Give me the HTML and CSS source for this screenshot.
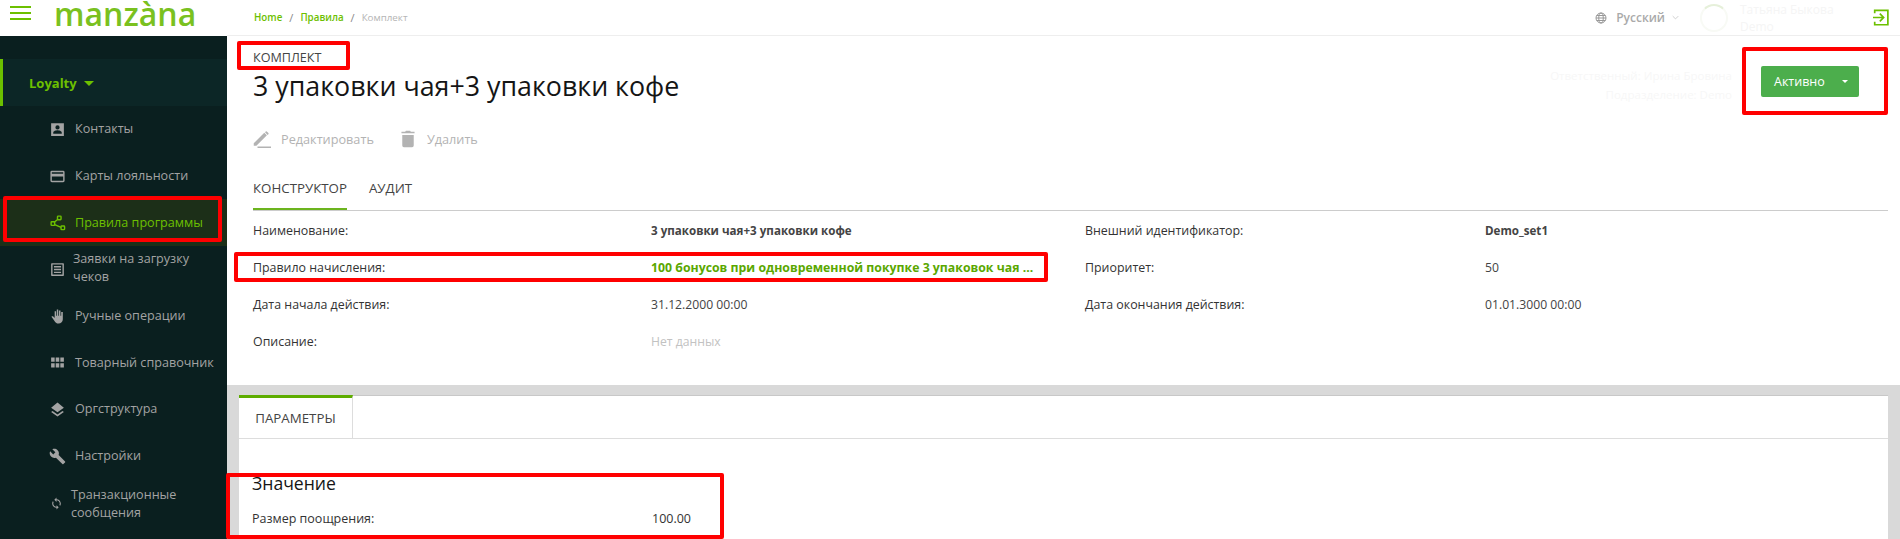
FILE: index.html
```html
<!DOCTYPE html>
<html lang="ru">

<head>
    <meta charset="UTF-8">
    <title>Manzana Loyalty</title>
    <link rel="stylesheet" href="styles.css">
</head>

<body>
    <aside class="sidebar">
        <div class="brand">
            <div class="burger"><span></span><span></span><span></span></div>
            <div class="logo">manzàna</div>
        </div>
        <nav class="nav">
            <div class="nav-group">Loyalty <i class="caret"></i></div>
            <a class="nav-item">
                <svg class="nav-icon" viewBox="0 0 24 24"><path d="M3 3h18v18H3z M12 6a3 3 0 1 0 0 6a3 3 0 0 0 0-6z M6 18h12v-1.500c0-2.500-4-3.500-6-3.500s-6 1-6 3.500z" fill-rule="evenodd"/></svg>
                <span>Контакты</span>
            </a>
            <a class="nav-item">
                <svg class="nav-icon" viewBox="0 0 24 24"><path d="M20 4H4a2 2 0 0 0-2 2v12a2 2 0 0 0 2 2h16a2 2 0 0 0 2-2V6a2 2 0 0 0-2-2zm0 14H4v-6h16zm0-10H4V6h16z"/></svg>
                <span>Карты лояльности</span>
            </a>
            <a class="nav-item active">
                <svg class="nav-icon" viewBox="0 0 24 24" fill="none" stroke="currentColor" stroke-width="2"><rect x="12" y="3" width="5" height="5" rx="1"/><rect x="3" y="11" width="5" height="5" rx="1"/><rect x="17" y="17" width="5" height="5" rx="1"/><path d="M13 7l-6 5M8 15l9 4"/></svg>
                <span>Правила программы</span>
            </a>
            <a class="nav-item two-lines">
                <svg class="nav-icon" viewBox="0 0 24 24"><path d="M4 3h16a1 1 0 0 1 1 1v16a1 1 0 0 1-1 1H4a1 1 0 0 1-1-1V4a1 1 0 0 1 1-1zm1 2v14h14V5zm2 2h10v2H7zm0 4h10v2H7zm0 4h10v2H7z" fill-rule="evenodd"/></svg>
                <span>Заявки на загрузку чеков</span>
            </a>
            <a class="nav-item">
                <svg class="nav-icon" viewBox="0 0 24 24"><path d="M11 2h2v9h1V3.500h2.200V11h1V5.500h2.300V16c0 3.500-2.500 6-6 6c-3 0-4.500-1.500-6-4l-4-5.500c.8-.9 2-.9 2.800-.2L8 14V4.500h2V11h1z"/></svg>
                <span>Ручные операции</span>
            </a>
            <a class="nav-item">
                <svg class="nav-icon" viewBox="0 0 24 24"><path d="M3 5h5v6H3zm6.500 0h5v6h-5zM16 5h5v6h-5zM3 13h5v6H3zm6.500 0h5v6h-5zM16 13h5v6h-5z"/></svg>
                <span>Товарный справочник</span>
            </a>
            <a class="nav-item">
                <svg class="nav-icon" viewBox="0 0 24 24"><path d="M12 2L3 9.500L12 16l9-6.500z M5 14l-2 1.500L12 22l9-6.500L19 14l-7 5z"/></svg>
                <span>Оргструктура</span>
            </a>
            <a class="nav-item">
                <svg class="nav-icon" viewBox="0 0 24 24"><path d="M22.700 19l-9.100-9.100c.9-2.300.4-5-1.500-6.900c-2-2-5-2.400-7.400-1.300L9 6L6 9L1.600 4.700C.4 7.100.9 10.100 2.900 12.100c1.900 1.900 4.600 2.400 6.900 1.500l9.100 9.100c.4.400 1 .4 1.400 0l2.300-2.300c.5-.4.500-1.100.1-1.400z"/></svg>
                <span>Настройки</span>
            </a>
            <a class="nav-item two-lines sync">
                <svg class="nav-icon small" viewBox="0 0 24 24"><path d="M12 4V1L8 5l4 4V6c3.300 0 6 2.700 6 6c0 1-.3 2-.7 2.800l1.500 1.500C19.500 15 20 13.600 20 12c0-4.400-3.600-8-8-8zm0 14c-3.300 0-6-2.700-6-6c0-1 .3-2 .7-2.800L5.200 7.700C4.500 9 4 10.400 4 12c0 4.400 3.600 8 8 8v3l4-4l-4-4z"/></svg>
                <span>Транзакционные сообщения</span>
            </a>
        </nav>
    </aside>

    <main class="content">
        <header class="topbar">
            <div class="breadcrumb">
                <a>Home</a><em>/</em><a>Правила</a><em>/</em><span>Комплект</span>
            </div>
            <div class="topbar-right">
                <svg class="globe" viewBox="0 0 24 24" fill="none" stroke="currentColor" stroke-width="2"><circle cx="12" cy="12" r="10"/><ellipse cx="12" cy="12" rx="4.500" ry="10"/><path d="M2 12h20M3.500 7h17M3.500 17h17"/></svg>
                <span class="lang">Русский</span>
                <svg class="chevron" viewBox="0 0 10 6" fill="none" stroke="currentColor"><path d="M1 1l4 4l4-4"/></svg>
                <div class="avatar"></div>
                <div class="user">Татьяна Быкова<br>Demo</div>
                <svg class="logout" viewBox="0 0 20 20" fill="none" stroke="#6cc000" stroke-width="2"><path d="M2 5V1.500h15.500v17H2V15"/><path d="M0 10h12M8 5.500l4.500 4.500L8 14.500"/></svg>
            </div>
        </header>

        <section class="summary">
            <div class="summary-top">
                <div>
                    <div class="kind">КОМПЛЕКТ</div>
                    <h1>3 упаковки чая+3 упаковки кофе</h1>
                </div>
                <div class="summary-side">
                    <div class="owner">Ответственный: Ирина Бровина<br>Подразделение: Demo</div>
                    <div class="status-btn"><span>Активно</span><i class="caret white"></i></div>
                </div>
            </div>
            <div class="actions">
                <a class="action">
                    <svg viewBox="0 0 24 24"><path d="M1 17.500V21h3.500L18.500 7L15 3.500zM20.500 5.500a1 1 0 0 0 0-1.400L18.400 2a1 1 0 0 0-1.400 0L16 3l3.500 3.500z"/><path d="M6 22h18v2H6z"/></svg>
                    Редактировать
                </a>
                <a class="action">
                    <svg viewBox="3 1 18 22"><path d="M5 20a2 2 0 0 0 2 2h10a2 2 0 0 0 2-2V7H5zM20 3h-4.500l-1-1h-5l-1 1H4v2h16z"/></svg>
                    Удалить
                </a>
            </div>
            <div class="tabs">
                <a class="tab current">КОНСТРУКТОР</a>
                <a class="tab">АУДИТ</a>
            </div>
            <div class="details">
                <div class="label">Наименование:</div>
                <div class="value bold">3 упаковки чая+3 упаковки кофе</div>
                <div class="label">Внешний идентификатор:</div>
                <div class="value bold">Demo_set1</div>

                <div class="label">Правило начисления:</div>
                <div class="value bold link">100 бонусов при одновременной покупке 3 упаковок чая и 3 упаковок кофе</div>
                <div class="label">Приоритет:</div>
                <div class="value">50</div>

                <div class="label">Дата начала действия:</div>
                <div class="value">31.12.2000 00:00</div>
                <div class="label">Дата окончания действия:</div>
                <div class="value">01.01.3000 00:00</div>

                <div class="label">Описание:</div>
                <div class="value muted">Нет данных</div>
            </div>
        </section>

        <section class="panel-wrap">
            <div class="panel">
                <div class="panel-tabs">
                    <a class="panel-tab">ПАРАМЕТРЫ</a>
                </div>
                <div class="panel-body">
                    <h2>Значение</h2>
                    <div class="param">
                        <div class="param-label">Размер поощрения:</div>
                        <div class="param-value">100.00</div>
                    </div>
                </div>
            </div>
        </section>
    </main>

    <!-- red marks drawn over the screenshot -->
    <div class="mark mark-rules"></div>
    <div class="mark mark-kind"></div>
    <div class="mark mark-status"></div>
    <div class="mark mark-accrual"></div>
    <div class="mark mark-value"></div>
</body>

</html>
```

FILE: styles.css
```css
html, body {
  height: 100%;
  overflow: hidden;
}
body {
  margin: 0;
  display: flex;
  font-family: "Open Sans", sans-serif;
  font-size: 13px;
  color: #333333;
  background: #ffffff;
}
.sidebar {
  flex: 0 0 227px;
  height: 539px;
  overflow: hidden;
  background: #0a1f1f;
}
.brand {
  height: 36px;
  background: #ffffff;
  display: flex;
  align-items: center;
  overflow: hidden;
}
.burger {
  width: 21px;
  margin-left: 10px;
  margin-top: -6px;
}
.burger span {
  display: block;
  height: 2px;
  background: #6cc000;
  margin-bottom: 4px;
}
.logo {
  margin-left: 23px;
  margin-top: -9px;
  color: #7ac11f;
  font-family: "Open Sans", sans-serif;
  font-weight: 600;
  font-size: 32px;
  line-height: 36px;
}
.nav {
  padding-top: 23px;
}
.nav-group {
  height: 47px;
  display: flex;
  align-items: center;
  gap: 7px;
  padding-left: 26px;
  background: #0c2626;
  border-left: 3px solid #6cc000;
  color: #6cc000;
  font-weight: 700;
  font-size: 13px;
}
.caret {
  display: inline-block;
  width: 0;
  height: 0;
  border-left: 5px solid transparent;
  border-right: 5px solid transparent;
  border-top: 5px solid #6cc000;
  margin-top: 2px;
}
.caret.white {
  border-left-width: 3.500px;
  border-right-width: 3.500px;
  border-top: 3.500px solid #ffffff;
  margin: 0;
}
.nav-item {
  height: 46.700px;
  display: flex;
  align-items: center;
  padding-left: 49px;
  color: #a3a3a3;
  font-size: 12.600px;
  line-height: 18px;
}
.nav-item span {
  margin-left: 9px;
  max-width: 150px;
}
.nav-item.active {
  background: #1c2f18;
  color: #6cc000;
}
.nav-item.two-lines span {
  margin-left: 7px;
  margin-top: -3px;
}
.nav-item.sync span {
  margin-left: 8px;
  margin-top: 0;
}
.nav-item.sync {
  margin-top: 1px;
}
.nav-icon {
  width: 17px;
  height: 17px;
  flex: none;
  fill: currentColor;
}
.nav-icon[fill="none"] {
  fill: none;
}
.nav-icon.small {
  width: 13px;
  height: 13px;
  margin-left: 1px;
}

.content {
  flex: 1;
  min-width: 0;
}
.topbar {
  height: 35px;
  border-bottom: 1px solid #eeeeee;
  display: flex;
  justify-content: space-between;
  align-items: center;
}
.breadcrumb {
  padding-left: 27px;
  font-size: 9.800px;
  color: #b5b5b5;
  display: flex;
  align-items: center;
}
.breadcrumb a {
  color: #6cc000;
  font-weight: 600;
}
.breadcrumb em {
  font-style: normal;
  color: #888888;
  margin: 0 7px;
  font-size: 11px;
}
.topbar-right {
  display: flex;
  align-items: center;
  color: #aaaaaa;
  padding-right: 10px;
}
.globe {
  width: 12px;
  height: 12px;
  color: #999999;
  margin-right: 9px;
}
.lang {
  font-weight: 600;
  font-size: 12px;
}
.chevron {
  width: 7px;
  height: 5px;
  margin-left: 7px;
  color: #bbbbbb;
}
.avatar {
  width: 24px;
  height: 24px;
  margin-left: 21px;
  border-radius: 50%;
  border: 2px solid #f8faf5;
  border-top-color: #e6f0da;
}
.user {
  width: 133px;
  margin-left: 12px;
  color: #f5f5f5;
  font-size: 12px;
  line-height: 17px;
}
.logout {
  width: 17px;
  height: 19px;
}

.summary {
  height: 349px;
  padding: 0 12px 0 26px;
  box-sizing: border-box;
}
.summary-top {
  display: flex;
  justify-content: space-between;
  padding-top: 14px;
}
.kind {
  font-size: 12.600px;
  line-height: 16px;
  color: #444444;
}
h1 {
  margin: 0;
  font-size: 26.800px;
  font-weight: 400;
  line-height: 40px;
  color: #151515;
}
.summary-side {
  display: flex;
  align-items: flex-start;
  margin-right: 29px;
}
.owner {
  margin-top: 16px;
  margin-right: 29px;
  text-align: right;
  color: #f7f7f7;
  font-size: 11.500px;
  line-height: 19px;
}
.status-btn {
  width: 98px;
  height: 31px;
  margin-top: 16px;
  box-sizing: border-box;
  padding: 0 11px 0 13px;
  background: #4cae4c;
  border-radius: 2px;
  display: flex;
  align-items: center;
  justify-content: space-between;
  color: #ffffff;
  font-size: 12.500px;
}
.actions {
  display: flex;
  gap: 25px;
  margin-top: 21px;
  height: 24px;
}
.action {
  display: flex;
  align-items: center;
  gap: 10px;
  color: #b3b3b3;
  font-size: 12.700px;
}
.action svg {
  width: 18px;
  height: 18px;
  fill: #b3b3b3;
}
.tabs {
  display: flex;
  gap: 22px;
  margin-top: 23px;
  border-bottom: 1px solid #cccccc;
  height: 36px;
}
.tab {
  font-size: 13.300px;
  line-height: 28px;
  height: 34px;
  color: #444444;
}
.tab.current {
  border-bottom: 2px solid #6cb41e;
}
.details {
  display: grid;
  grid-template-columns: 398px 434px 400px 1fr;
  grid-auto-rows: 37px;
  padding-top: 1px;
  align-items: center;
  font-size: 12.400px;
}
.label {
  color: #333333;
}
.value {
  color: #444444;
  min-width: 0;
  font-size: 12.200px;
}
.value.bold {
  font-weight: 700;
  font-size: 11.600px;
}
.value.link {
  color: #5aa700;
  font-size: 12.300px;
  white-space: nowrap;
  overflow: hidden;
  text-overflow: ellipsis;
  width: 388px;
}
.value.muted {
  color: #c2c2c2;
}

.panel-wrap {
  height: 154px;
  background: #d9d9d9;
  padding: 10px 12px 0 12px;
  box-sizing: border-box;
}
.panel {
  height: 100%;
  background: #ffffff;
  border-top: 1px solid #c8c8c8;
}
.panel-tabs {
  height: 43px;
  border-bottom: 1px solid #dddddd;
}
.panel-tab {
  display: flex;
  align-items: center;
  justify-content: center;
  width: 113px;
  height: 40px;
  border-top: 3px solid #5ead00;
  border-right: 1px solid #dddddd;
  background: #ffffff;
  color: #444444;
  font-size: 13.300px;
  margin-top: -1px;
}
.panel-body {
  padding: 32px 0 0 13px;
}
h2 {
  margin: 0;
  font-size: 17.600px;
  font-weight: 400;
  line-height: 24px;
  color: #151515;
}
.param {
  display: flex;
  align-items: center;
  margin-top: 15px;
  font-size: 12.500px;
  color: #333333;
}
.param-label {
  width: 400px;
}

.mark {
  position: absolute;
  box-sizing: border-box;
  border: 4px solid #ff0000;
  border-radius: 2px;
  pointer-events: none;
}
.mark-rules {
  left: 3px;
  top: 196px;
  width: 219px;
  height: 46px;
}
.mark-kind {
  left: 237px;
  top: 41px;
  width: 113px;
  height: 29px;
}
.mark-status {
  left: 1742px;
  top: 47px;
  width: 146px;
  height: 68px;
}
.mark-accrual {
  left: 234px;
  top: 252px;
  width: 814px;
  height: 30px;
}
.mark-value {
  left: 226px;
  top: 473px;
  width: 498px;
  height: 66px;
}
```
